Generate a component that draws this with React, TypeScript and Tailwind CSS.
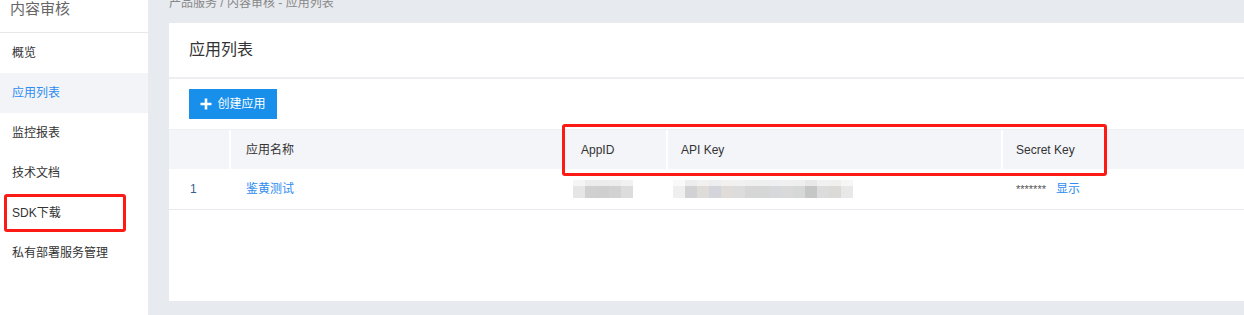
import React from "react";

const navItems = ["概览", "应用列表", "监控报表", "技术文档", "SDK下载", "私有部署服务管理"];

const appIdBlocks = ["#e6e6e6", "#d0d0d0", "#cfcfcf", "#d2d2d2", "#dcdcdc"];
const apiKeyBlocks = [
  "#efefef", "#d2d2d4", "#dedbd8", "#d3d5da", "#e0dcd9", "#dcdcdc", "#d6d6d6", "#d5d6d6",
  "#d7d8dc", "#d9d9d9", "#d6d8d8", "#c5c6c6", "#dcdcdc", "#dcdad6", "#e8e8e8",
];

function Mosaic({ blocks }: { blocks: string[] }) {
  return (
    <div className="flex flex-col">
      <div className="flex h-[6px]">
        {blocks.map((c, i) => (
          <div key={i} className="w-[12px] opacity-40" style={{ backgroundColor: c }} />
        ))}
      </div>
      <div className="flex h-[12px]">
        {blocks.map((c, i) => (
          <div key={i} className="w-[12px]" style={{ backgroundColor: c }} />
        ))}
      </div>
    </div>
  );
}

export default function App() {
  return (
    <div
      className="flex h-[315px] w-[1244px] overflow-hidden bg-[#e7eaef] text-[12px] text-[#333]"
      style={{ fontFamily: '"Liberation Sans", "Noto Sans CJK SC", sans-serif' }}
    >
      {/* sidebar */}
      <aside className="relative w-[148px] shrink-0 bg-white">
        <div className="h-[34px] border-b border-[#e8e8e8] pl-[10px]">
          <div className="-mt-px text-[15px] leading-[20px] text-[#666]">内容审核</div>
        </div>
        <nav>
          {navItems.map((item) => (
            <div
              key={item}
              className={
                "flex h-[40px] items-center pl-[12px] " +
                (item === "应用列表" ? "bg-[#f3f4f8] text-[#2d8cf0]" : "text-[#333]")
              }
            >
              {item}
            </div>
          ))}
        </nav>
        <div className="absolute left-[4px] top-[194px] h-[38px] w-[122px] rounded-[3px] border-[3px] border-[#fb1b14]" />
      </aside>

      {/* main */}
      <main className="relative flex min-w-0 flex-1 flex-col pl-[21px]">
        <div className="h-[23px] overflow-hidden">
          <div className="-mt-[5px] text-[12px] leading-[16px] text-[#888]">产品服务 / 内容审核 - 应用列表</div>
        </div>
        <section className="h-[278px] w-[1100px] bg-white">
          <div className="flex h-[56px] items-center border-b-2 border-[#eceef1] pl-[20px] text-[16px] text-[#333]">
            应用列表
          </div>
          <div className="pl-[20px] pt-[10px]">
            <button className="flex h-[30px] w-[88px] items-center justify-center gap-[5px] bg-[#1890eb] text-[12px] text-white">
              <svg width="12" height="12" viewBox="0 0 12 12">
                <path d="M6 0.5v11M0.5 6h11" stroke="white" strokeWidth="2.6" />
              </svg>
              创建应用
            </button>
          </div>
          <div className="mt-[10px]">
            <div className="flex h-[40px] items-center border-t border-[#eef0f3] bg-[#f4f5f9] text-[#333]">
              <div className="h-full w-[60px]" />
              <div className="flex h-full w-[336px] items-center border-l-2 border-white pl-[15px]">应用名称</div>
              <div className="flex h-full w-[101px] items-center pl-[16px]">AppID</div>
              <div className="flex h-full w-[335px] items-center border-l-2 border-white pl-[13px]">API Key</div>
              <div className="flex h-full flex-1 items-center border-l-2 border-white pl-[13px]">Secret Key</div>
            </div>
            <div className="flex h-[41px] items-center border-b border-[#e8eaef]">
              <div className="w-[60px] pl-[21px] text-[#3a5e8c]">1</div>
              <div className="w-[336px] pl-[17px] text-[#2d8cf0]">鉴黄测试</div>
              <div className="w-[101px] pl-[8px]">
                <Mosaic blocks={appIdBlocks} />
              </div>
              <div className="w-[335px] pl-[7px]">
                <Mosaic blocks={apiKeyBlocks} />
              </div>
              <div className="flex flex-1 items-center pl-[15px]">
                <span className="text-[11px] text-[#555]">*******</span>
                <span className="ml-[10px] text-[#2d8cf0]">显示</span>
              </div>
            </div>
          </div>
        </section>
        <div className="absolute left-[414px] top-[124px] h-[52px] w-[545px] rounded-[3px] border-[3px] border-[#fb1b14]" />
      </main>
    </div>
  );
}
